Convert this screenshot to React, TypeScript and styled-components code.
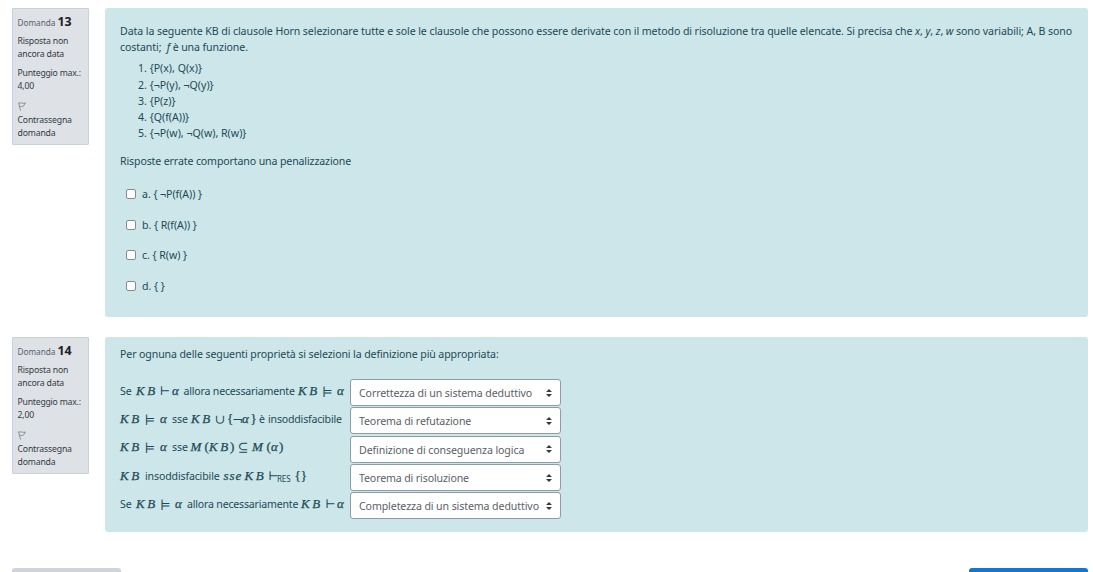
import React from 'react';
import styled, { createGlobalStyle } from 'styled-components';

const Global = createGlobalStyle`
  * { box-sizing: border-box; }
  body { margin: 0; background: #fff; overflow: hidden; }
`;

const Page = styled.main`
  height: 572px;
  overflow: hidden;
  padding: 8px 5px 0 12px;
  font-family: 'Noto Sans', 'Open Sans', sans-serif;
  font-size: 10.6px;
  color: #1c4a56;
`;

const Question = styled.section<{ $height: number }>`
  display: flex;
  align-items: flex-start;
  gap: 16px;
  height: ${p => p.$height}px;
  margin-bottom: 20px;
`;

const Info = styled.aside`
  flex: none;
  width: 77px;
  height: 137px;
  padding: 4px 0 0 4.5px;
  border: 1px solid #cad0d7;
  border-radius: 1px;
  background: #dee2e6;
  color: #343a42;
  font-size: 8.7px;
  line-height: 13.2px;
  white-space: nowrap;
`;

const Heading = styled.h3`
  margin: 0 0 3.5px;
  font-size: 8.2px;
  font-weight: 400;
  line-height: 18px;
  height: 18px;
  color: #59616a;
`;

const Num = styled.span`
  font-size: 12.4px;
  font-weight: 700;
  color: #1d2125;
`;

const InfoText = styled.div<{ $ls?: number; $gap?: number }>`
  letter-spacing: ${p => p.$ls ?? -0.17}px;
  margin-bottom: ${p => p.$gap ?? 0}px;
`;

const Flag = styled.svg`
  display: block;
  width: 8px;
  height: 9px;
  margin: 0 0 3px;
`;

const Content = styled.div<{ $top: number }>`
  flex: 1;
  min-width: 0;
  height: 100%;
  padding: ${p => p.$top}px 0 0 15px;
  border-radius: 3px;
  background: #cde6ea;
`;

const Line = styled.div<{ $ls?: number }>`
  height: 16.2px;
  line-height: 16.2px;
  white-space: pre;
  letter-spacing: ${p => p.$ls ?? 0}px;
`;

const Clauses = styled.ol`
  list-style: none;
  margin: 5px 0 12px;
  padding: 0 0 0 18px;
`;

const Options = styled.div`
  display: grid;
  grid-auto-rows: 30.5px;
  padding: 9.5px 0 0 6px;
`;

const Option = styled.label`
  display: flex;
  align-items: center;
  gap: 6px;
`;

const Check = styled.input`
  appearance: none;
  width: 10px;
  height: 10px;
  margin: 0;
  border: 1px solid #858b90;
  border-radius: 2px;
  background: #fff;
`;

const Match = styled.div`
  display: grid;
  grid-template-columns: 230px 211px;
  grid-auto-rows: 28.3px;
  margin-top: 17px;
`;

const Formula = styled.div`
  display: flex;
  align-items: baseline;
  height: 22px;
  line-height: 22px;
  padding-top: 0.5px;
  white-space: pre;
`;

const Token = styled.span<{ $w: number; $ls?: number }>`
  flex: none;
  width: ${p => p.$w}px;
  letter-spacing: ${p => p.$ls ?? -0.11}px;
`;

const MathToken = styled(Token)`
  font-family: 'Liberation Serif', serif;
  font-size: 13px;
  line-height: 1;
  font-style: italic;
  -webkit-text-stroke: 0.25px currentColor;
`;

const Upright = styled(MathToken)`
  font-style: normal;
`;

const Sign = styled(Token)`
  font-family: 'DejaVu Math TeX Gyre', 'DejaVu Sans', sans-serif;
  font-size: 12.5px;
  line-height: 1;
`;

const Small = styled(Token)`
  font-size: 8px;
  position: relative;
  top: 2px;
`;

const Select = styled.button`
  display: flex;
  align-items: center;
  justify-content: space-between;
  height: 27px;
  padding: 1px 8px 0 8px;
  border: 1px solid #8f9ba5;
  border-radius: 3px;
  background: #fff;
  color: #5a6068;
  font: inherit;
  font-size: 10.6px;
  white-space: nowrap;
`;

const Label = styled.span<{ $ls: number }>`
  letter-spacing: ${p => p.$ls}px;
`;

const Arrows = styled.svg`
  width: 6px;
  height: 8px;
  margin-top: -1px;
`;

const Footer = styled.footer`
  display: flex;
  justify-content: space-between;
  margin-top: 36px;
`;

const NavButton = styled.button<{ $w: number; $bg: string }>`
  width: ${p => p.$w}px;
  height: 28px;
  border: 0;
  border-radius: 3px;
  background: ${p => p.$bg};
`;

function InfoPanel({ number, score }: { number: number; score: string }) {
  return (
    <Info>
      <Heading>Domanda <Num>{number}</Num></Heading>
      <InfoText>Risposta non</InfoText>
      <InfoText $gap={6.2}>ancora data</InfoText>
      <InfoText $ls={-0.23}>Punteggio max.:</InfoText>
      <InfoText $gap={8}>{score}</InfoText>
      <Flag viewBox="0 0 8 9" fill="none" stroke="#747b82">
        <path d="M.5 .8 2.6 8.6M.6 1.1C3 .2 4.7 2 7.4 1L5.3 4.2C4.2 5 3 3.9 1.8 4.5" strokeWidth=".8" />
      </Flag>
      <InfoText>Contrassegna</InfoText>
      <InfoText>domanda</InfoText>
    </Info>
  );
}

type Kind = 't' | 'm' | 'u' | 's' | 'b';
type Piece = [Kind, string, number, number?];
const kinds = { t: Token, m: MathToken, u: Upright, s: Sign, b: Small };

const rows: { pieces: Piece[]; answer: string; ls: number }[] = [
  {
    pieces: [['t', 'Se', 16], ['m', 'KB', 24, 2.5], ['s', '⊢', 12], ['m', 'α', 11.5], ['t', 'allora necessariamente', 114.5, -0.2], ['m', 'KB', 24.5, 2.5], ['s', '⊨', 14.5], ['m', 'α', 9]],
    answer: 'Correttezza di un sistema deduttivo', ls: -0.1,
  },
  {
    pieces: [['m', 'KB', 25, 2.5], ['s', '⊨', 15], ['m', 'α', 12], ['t', 'sse', 19], ['m', 'KB', 24, 2.5], ['s', '∪', 12], ['u', '{', 5.5], ['s', '¬', 9.5], ['m', 'α', 8.5], ['u', '}', 8.5], ['t', 'è', 9], ['t', 'insoddisfacibile', 75, -0.2]],
    answer: 'Teorema di refutazione', ls: -0.13,
  },
  {
    pieces: [['m', 'KB', 25, 2.5], ['s', '⊨', 15], ['m', 'α', 12], ['t', 'sse', 18.5], ['m', 'M', 14], ['u', '(', 4.5], ['m', 'KB', 21, 2.5], ['u', ')', 8], ['s', '⊆', 14], ['m', 'M', 14.5], ['u', '(', 4.5], ['m', 'α', 8], ['u', ')', 5]],
    answer: 'Definizione di conseguenza logica', ls: -0.1,
  },
  {
    pieces: [['m', 'KB', 25, 2.5], ['t', 'insoddisfacibile', 78.5, -0.15], ['m', 'sse', 21, 0.9], ['m', 'KB', 24, 2.5], ['s', '⊢', 8.5], ['b', 'RES', 17.5], ['u', '{}', 13]],
    answer: 'Teorema di risoluzione', ls: -0.13,
  },
  {
    pieces: [['t', 'Se', 16], ['m', 'KB', 24.5, 2.5], ['s', '⊨', 14.5], ['m', 'α', 12], ['t', 'allora necessariamente', 114, -0.2], ['m', 'KB', 24.5, 2.5], ['s', '⊢', 11.5], ['m', 'α', 9]],
    answer: 'Completezza di un sistema deduttivo', ls: -0.1,
  },
];

const clauses = ['1. {P(x), Q(x)}', '2. {¬P(y), ¬Q(y)}', '3. {P(z)}', '4. {Q(f(A))}', '5. {¬P(w), ¬Q(w), R(w)}'];
const options = ['a. { ¬P(f(A)) }', 'b. { R(f(A)) }', 'c. { R(w) }', 'd. { }'];

export default function App() {
  return (
    <>
      <Global />
      <Page>
        <Question $height={309}>
          <InfoPanel number={13} score="4,00" />
          <Content $top={15}>
            <Line $ls={-0.09}>
              Data la seguente KB di clausole Horn selezionare tutte e sole le clausole che possono essere derivate con il metodo di risoluzione tra quelle elencate. Si precisa che <i>x</i>, <i>y</i>, <i>z</i>, <i>w</i> sono variabili; A, B sono
            </Line>
            <Line $ls={-0.1}>costanti;  <i>f</i> è una funzione.</Line>
            <Clauses>
              {clauses.map(c => <Line as="li" $ls={0} key={c}>{c}</Line>)}
            </Clauses>
            <Line $ls={-0.13}>Risposte errate comportano una penalizzazione</Line>
            <Options>
              {options.map(o => (
                <Option key={o}><Check type="checkbox" /><Line as="span" $ls={-0.05}>{o}</Line></Option>
              ))}
            </Options>
          </Content>
        </Question>
        <Question $height={195}>
          <InfoPanel number={14} score="2,00" />
          <Content $top={9}>
            <Line $ls={-0.12}>Per ognuna delle seguenti proprietà si selezioni la definizione più appropriata:</Line>
            <Match>
              {rows.map(r => (
                <React.Fragment key={r.answer}>
                  <Formula>
                    {r.pieces.map(([k, text, w, ls], i) => {
                      const T = kinds[k];
                      return <T key={i} $w={w} $ls={ls}>{text}</T>;
                    })}
                  </Formula>
                  <Select>
                    <Label $ls={r.ls}>{r.answer}</Label>
                    <Arrows viewBox="0 0 6 8" fill="#343a40"><path d="M3 0 6 3H0zM3 8 0 5h6z" /></Arrows>
                  </Select>
                </React.Fragment>
              ))}
            </Match>
          </Content>
        </Question>
        <Footer>
          <NavButton $w={109} $bg="#ced4da" aria-label="Pagina precedente" />
          <NavButton $w={119} $bg="#1177d1" aria-label="Pagina successiva" />
        </Footer>
      </Page>
    </>
  );
}
